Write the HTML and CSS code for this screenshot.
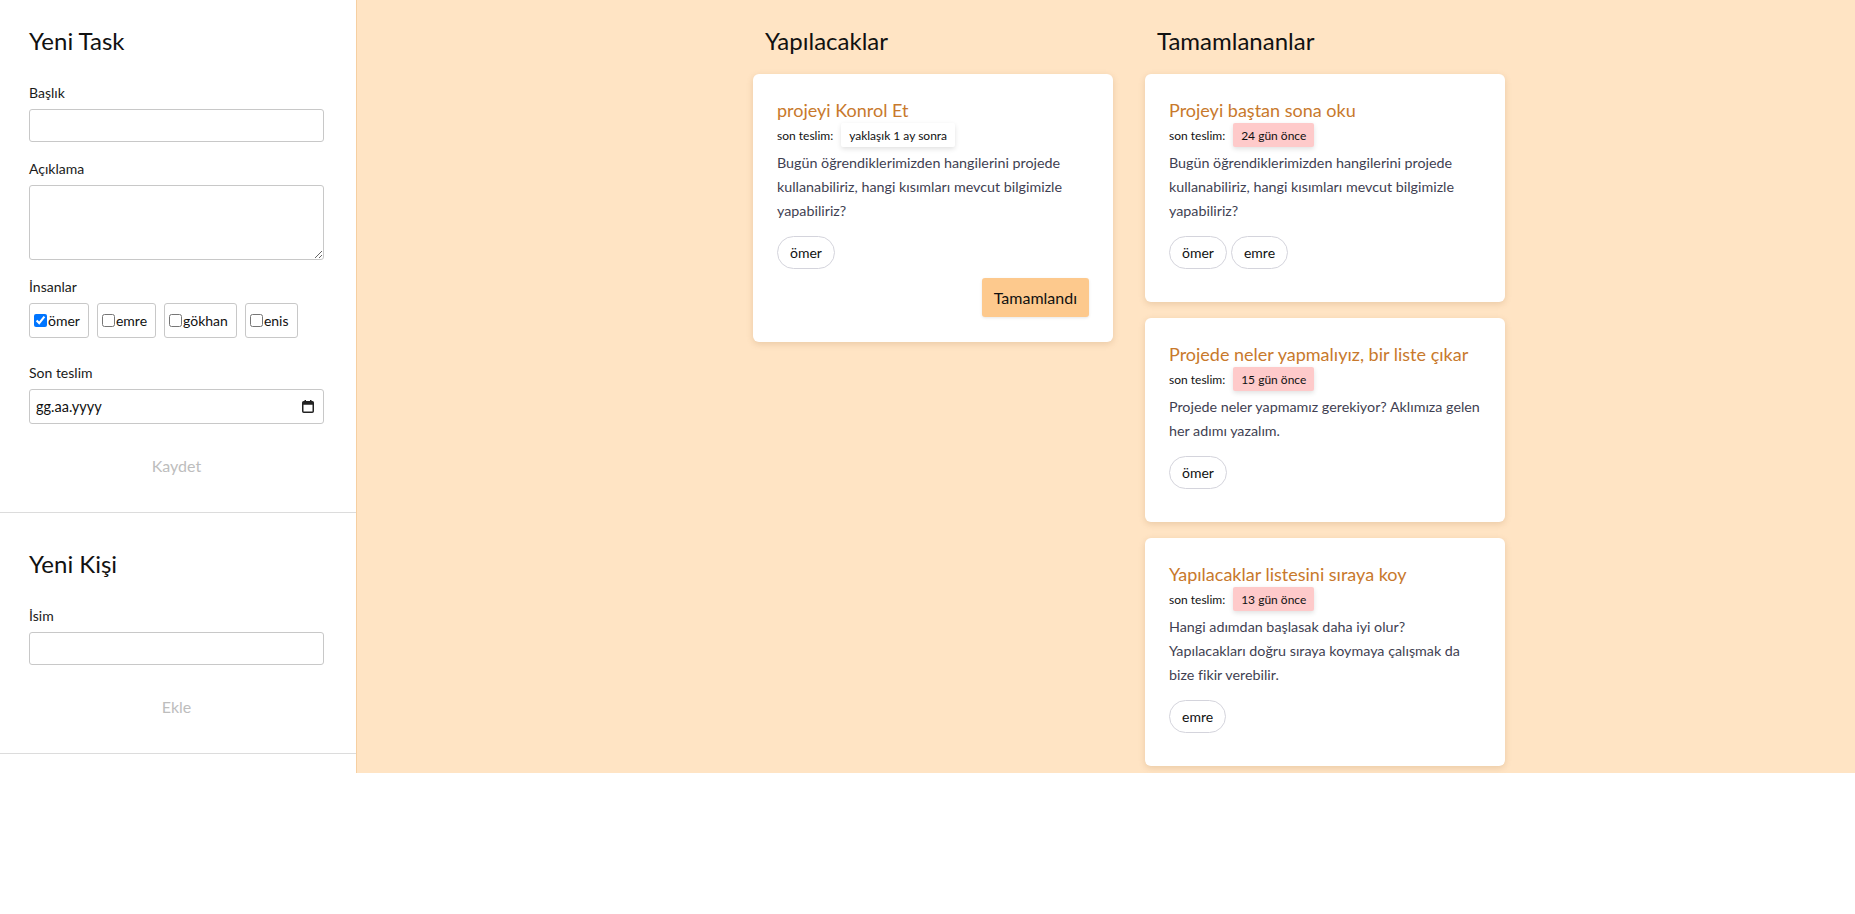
FILE: index.html
```html
<!DOCTYPE html>
<html lang="tr">
<head>
<meta charset="utf-8">
<title>Tasks</title>
<link rel="stylesheet" href="styles.css">
</head>
<body>
<div class="app">
  <aside class="sidebar">
    <section class="panel">
      <h2 class="panel-title">Yeni Task</h2>
      <div class="field">
        <label class="field-label">Başlık</label>
        <input class="text-input" type="text">
      </div>
      <div class="field">
        <label class="field-label">Açıklama</label>
        <textarea class="text-area"></textarea>
      </div>
      <div class="field field-people">
        <label class="field-label">İnsanlar</label>
        <div class="people">
          <label class="person"><input type="checkbox" checked>ömer</label>
          <label class="person"><input type="checkbox">emre</label>
          <label class="person"><input type="checkbox">gökhan</label>
          <label class="person"><input type="checkbox">enis</label>
        </div>
      </div>
      <div class="field">
        <label class="field-label">Son teslim</label>
        <div class="date-input">
          <span>gg.aa.yyyy</span>
          <svg class="cal-icon" width="12" height="13" viewBox="0 0 12 13"><rect x="0.75" y="1.75" width="10.5" height="10.5" rx="1" fill="none" stroke="#222" stroke-width="1.5"/><rect x="0.75" y="1.75" width="10.5" height="3" fill="#222"/><rect x="2.5" y="0" width="1.5" height="2" fill="#222"/><rect x="8" y="0" width="1.5" height="2" fill="#222"/></svg>
        </div>
      </div>
      <button class="submit" disabled>Kaydet</button>
    </section>
    <section class="panel panel-person">
      <h2 class="panel-title">Yeni Kişi</h2>
      <div class="field">
        <label class="field-label">İsim</label>
        <input class="text-input" type="text">
      </div>
      <button class="submit" disabled>Ekle</button>
    </section>
  </aside>

  <main class="board">
    <div class="column">
      <h2 class="column-title">Yapılacaklar</h2>
      <div class="card">
        <h3 class="card-title">projeyi Konrol Et</h3>
        <div class="due"><span class="due-label">son teslim:</span><span class="badge">yaklaşık 1 ay sonra</span></div>
        <p class="card-desc">Bugün öğrendiklerimizden hangilerini projede kullanabiliriz, hangi kısımları mevcut bilgimizle yapabiliriz?</p>
        <div class="pills"><span class="pill">ömer</span></div>
        <div class="card-actions"><button class="done-btn">Tamamlandı</button></div>
      </div>
    </div>
    <div class="column">
      <h2 class="column-title">Tamamlananlar</h2>
      <div class="card">
        <h3 class="card-title">Projeyi baştan sona oku</h3>
        <div class="due"><span class="due-label">son teslim:</span><span class="badge badge-late">24 gün önce</span></div>
        <p class="card-desc">Bugün öğrendiklerimizden hangilerini projede kullanabiliriz, hangi kısımları mevcut bilgimizle yapabiliriz?</p>
        <div class="pills"><span class="pill">ömer</span><span class="pill">emre</span></div>
      </div>
      <div class="card">
        <h3 class="card-title">Projede neler yapmalıyız, bir liste çıkar</h3>
        <div class="due"><span class="due-label">son teslim:</span><span class="badge badge-late">15 gün önce</span></div>
        <p class="card-desc">Projede neler yapmamız gerekiyor? Aklımıza gelen her adımı yazalım.</p>
        <div class="pills"><span class="pill">ömer</span></div>
      </div>
      <div class="card">
        <h3 class="card-title">Yapılacaklar listesini sıraya koy</h3>
        <div class="due"><span class="due-label">son teslim:</span><span class="badge badge-late">13 gün önce</span></div>
        <p class="card-desc">Hangi adımdan başlasak daha iyi olur? Yapılacakları doğru sıraya koymaya çalışmak da bize fikir verebilir.</p>
        <div class="pills"><span class="pill">emre</span></div>
      </div>
    </div>
  </main>
</div>
</body>
</html>
```

FILE: styles.css
```css
* { box-sizing: border-box; }
html, body { margin: 0; padding: 0; background: #fff; }
body {
  font-family: "Lato", "Noto Sans", sans-serif;
  color: #111;
  font-size: 14px;
}
.app {
  display: flex;
  align-items: flex-start;
}
.sidebar {
  width: 356px;
  flex: 0 0 356px;
}
.panel {
  padding: 25px 32px 27px 29px;
  border-bottom: 1px solid #dcdcdc;
}
.panel-person { padding-top: 35px; }
.panel-title {
  margin: 0 0 26px;
  font-size: 24px;
  line-height: 32px;
  font-weight: 400;
  color: #111;
}
.field { margin-bottom: 17px; }
.field-people { margin-bottom: 25px; }
.field-label {
  display: block;
  font-size: 14px;
  line-height: 20px;
  margin-bottom: 6px;
  color: #1a1a1a;
}
.text-input {
  display: block;
  width: 100%;
  height: 33px;
  border: 1px solid #c8c8c8;
  border-radius: 3px;
  margin: 0;
  font: inherit;
}
.text-area {
  display: block;
  width: 100%;
  height: 75px;
  border: 1px solid #c8c8c8;
  border-radius: 3px;
  margin: 0;
  font: inherit;
}
.people {
  display: flex;
  gap: 8px;
}
.person {
  display: flex;
  align-items: center;
  height: 35px;
  padding: 0 8px 0 4px;
  border: 1px solid #c8c8c8;
  border-radius: 3px;
  font-size: 14px;
}
.person input {
  margin: 0 1px 0 0;
  width: 13px;
  height: 13px;
}
.date-input {
  display: flex;
  align-items: center;
  justify-content: space-between;
  height: 35px;
  padding: 0 9px 0 6px;
  border: 1px solid #c8c8c8;
  border-radius: 3px;
  font-size: 14.5px;
  color: #111;
}
.submit {
  display: block;
  margin: 21px auto 0;
  height: 40px;
  padding: 0 12px;
  background: transparent;
  border: none;
  font: inherit;
  font-size: 16px;
  color: #bdbdbd;
}

.board {
  flex: 1;
  display: flex;
  gap: 32px;
  padding: 25px 0 7px 396px;
  background: #ffe4c4;
  border-left: 1px solid #f6cfa1;
}
.column {
  width: 360px;
  display: flex;
  flex-direction: column;
  gap: 16px;
}
.column-title {
  margin: 0 0 1px 12px;
  font-size: 24px;
  line-height: 32px;
  font-weight: 400;
  color: #111;
}
.card {
  background: #fff;
  border-radius: 6px;
  padding: 23px 24px 24px;
  box-shadow: 0 2px 6px rgba(160, 110, 60, 0.22);
}
.card-title {
  margin: 0;
  font-size: 18px;
  line-height: 26px;
  font-weight: 400;
  color: #c8792c;
}
.due {
  display: flex;
  align-items: center;
  gap: 8px;
  font-size: 12px;
  color: #111;
}
.badge {
  display: inline-flex;
  align-items: center;
  height: 24px;
  padding: 0 8px;
  border-radius: 2px;
  background: #fff;
  box-shadow: 0 2px 5px rgba(0, 0, 0, 0.12);
}
.badge-late { background: #fecaca; }
.card-desc {
  margin: 4px 0 0;
  font-size: 14.3px;
  line-height: 24px;
  color: #3f3f52;
}
.pills {
  display: flex;
  gap: 4px;
  margin: 13px 0 9px;
}
.pill {
  display: inline-flex;
  align-items: center;
  height: 33px;
  padding: 0 12px;
  border: 1px solid #d4d4dc;
  border-radius: 999px;
  font-size: 14px;
  color: #111;
}
.card-actions {
  display: flex;
  justify-content: flex-end;
  padding-bottom: 1px;
}
.done-btn {
  height: 39px;
  padding: 0 12px;
  border: none;
  border-radius: 3px;
  background: #fdc98d;
  font: inherit;
  font-size: 16px;
  color: #111;
  box-shadow: 0 1px 3px rgba(0, 0, 0, 0.1);
}
```
